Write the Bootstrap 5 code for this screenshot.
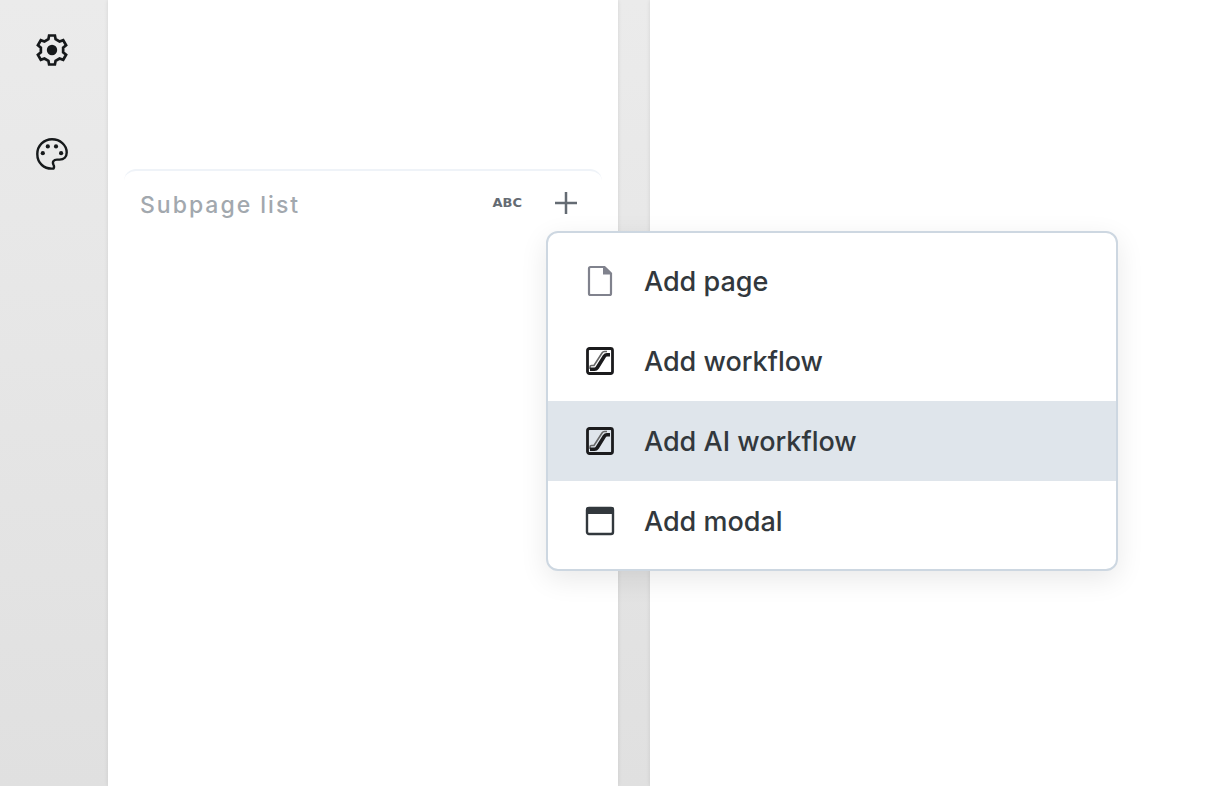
<!DOCTYPE html>
<html lang="en">
<head>
<meta charset="utf-8">
<meta name="viewport" content="width=device-width, initial-scale=1">
<title>Subpage list</title>
<link href="https://cdn.jsdelivr.net/npm/bootstrap@5.3.0/dist/css/bootstrap.min.css" rel="stylesheet">
<style>
body { font-family: Inter, "Liberation Sans", sans-serif; background: linear-gradient(#ebebeb, #e0e0e0) fixed; }
.rail { width: 108px; padding-top: 24px; gap: 52px; }
.rail-btn { width: 52px; height: 52px; color: #16191b; }
.pane { background: #fff; box-shadow: 0 0 4px rgba(0, 0, 0, .1); }
.side-pane { width: 510px; padding: 169px 16px 0; }
.canvas-pane { margin-left: 32px; }
.subpages { border-top: 2px solid #eff3f8; border-radius: 12px; padding: 8px 16px 0; }
.subpages-title { font-size: 23px; line-height: 44px; padding-top: 4px; font-weight: 500; letter-spacing: 2px; color: #a2a8ae; }
.tool-btn { height: 48px; color: #646b73; }
.abc-btn { font: 700 13px/48px "DejaVu Sans", sans-serif; }
.add-menu { left: 0; top: 52px; width: 572px; padding: 8px 0; border: 2px solid #cdd7e1; border-radius: 12px; background: #fff; box-shadow: 0 8px 28px rgba(0, 0, 0, .09); z-index: 10; }
.menu-row { height: 80px; padding: 0 36px; gap: 28px; font-size: 27px; line-height: 40px; font-weight: 500; color: #32383d; }
.menu-row span { padding-top: 2px; }
.menu-row.active { background: #dfe5eb; color: #32383d; }
</style>
</head>
<body class="min-vh-100 d-flex overflow-hidden">
<svg class="d-none" aria-hidden="true">
  <symbol id="escalator" viewBox="0 0 32 32"><g fill="none" stroke="#1b1b1d"><rect x="3.500" y="3.500" width="25" height="25" rx="2" stroke-width="2.800"/><path d="M6 24V22Q6 20.500 7.500 20.500H10L18 8Q19 6.500 20.500 6.500H23" stroke="#666" stroke-width="1.600"/><path d="M6 24.200H10.500Q12.300 24.200 13.200 22.700L20.500 11Q21.300 9.800 22.800 9.800H26" stroke-width="3.600"/></g></symbol>
</svg>
<nav class="rail d-flex flex-column align-items-center flex-shrink-0 pe-1" aria-label="Tools">
  <button type="button" class="rail-btn btn border-0 p-0 d-flex align-items-center justify-content-center" aria-label="Settings">
    <svg width="32" height="32" viewBox="-16 -16 32 32" fill="none" stroke="currentColor" stroke-width="2.7" stroke-linejoin="miter"><path d="M-2.9-14.5H2.9L3.6-10.8 7.55-8.5 11.2-9.8 14.1-4.8 11.15-2.3V2.3L14.1 4.8 11.2 9.8 7.55 8.5 3.6 10.8 2.9 14.5H-2.9L-3.6 10.8-7.55 8.5-11.2 9.8-14.1 4.8-11.15 2.3V-2.3L-14.1-4.8-11.2-9.8-7.55-8.5-3.6-10.8Z"/><circle r="5.2" fill="currentColor" stroke="none"/></svg>
  </button>
  <button type="button" class="rail-btn btn border-0 p-0 d-flex align-items-center justify-content-center" aria-label="Theme">
    <svg width="32" height="32" viewBox="0 0 32 32"><path d="M17.6 30.5C8 31.5 1.3 25 1.3 16 1.3 7.500 8 1.300 16 1.300S30.700 7 30.700 14.500C30.700 19 28 21.600 23.500 21.600H21C17.500 21.600 16.200 24 17.400 26.500 18.200 28 18.300 29.200 17.600 30.500Z" fill="none" stroke="currentColor" stroke-width="2.400" stroke-linejoin="round"/><g fill="currentColor"><circle cx="6.800" cy="15.200" r="2.100"/><circle cx="11.800" cy="8.400" r="2.100"/><circle cx="20" cy="8.400" r="2.100"/><circle cx="25.100" cy="15.200" r="2.100"/></g></svg>
  </button>
</nav>
<aside class="pane side-pane flex-shrink-0">
  <section class="subpages d-flex align-items-center">
    <h2 class="subpages-title mb-0 me-auto">Subpage list</h2>
    <button type="button" class="tool-btn abc-btn btn border-0 p-0 me-4">ABC</button>
    <div class="position-relative">
      <button type="button" class="tool-btn btn border-0 px-2 py-0 d-flex align-items-center" aria-label="Add" aria-expanded="true">
        <svg width="24" height="24" viewBox="0 0 24 24" fill="none" stroke="currentColor" stroke-width="2.500"><path d="M12 1V23M1 12H23"/></svg>
      </button>
      <div class="add-menu position-absolute">
        <button type="button" class="menu-row dropdown-item d-flex align-items-center">
          <svg width="32" height="32" viewBox="0 0 32 32"><path d="M6.500 2H20.500L27 8.500V28.500Q27 30 25.500 30H6.500Q5 30 5 28.500V3.500Q5 2 6.500 2Z" fill="none" stroke="#80828d" stroke-width="2.200"/><path d="M19 2H21.500L27 7.500V9.500H19Z" fill="#80828d"/></svg>
          <span>Add page</span>
        </button>
        <button type="button" class="menu-row dropdown-item d-flex align-items-center">
          <svg width="32" height="32"><use href="#escalator"/></svg>
          <span>Add workflow</span>
        </button>
        <button type="button" class="menu-row active dropdown-item d-flex align-items-center">
          <svg width="32" height="32"><use href="#escalator"/></svg>
          <span>Add AI workflow</span>
        </button>
        <button type="button" class="menu-row dropdown-item d-flex align-items-center">
          <svg width="32" height="32" viewBox="0 0 32 32"><rect x="3" y="3" width="26" height="26" rx="2" fill="none" stroke="#32383d" stroke-width="2.400"/><path d="M2 9V4Q2 2 4 2H28Q30 2 30 4V9Z" fill="#32383d"/></svg>
          <span>Add modal</span>
        </button>
      </div>
    </div>
  </section>
</aside>
<main class="pane canvas-pane flex-grow-1"></main>
<script src="https://cdn.jsdelivr.net/npm/bootstrap@5.3.0/dist/js/bootstrap.bundle.min.js"></script>
</body>
</html>
